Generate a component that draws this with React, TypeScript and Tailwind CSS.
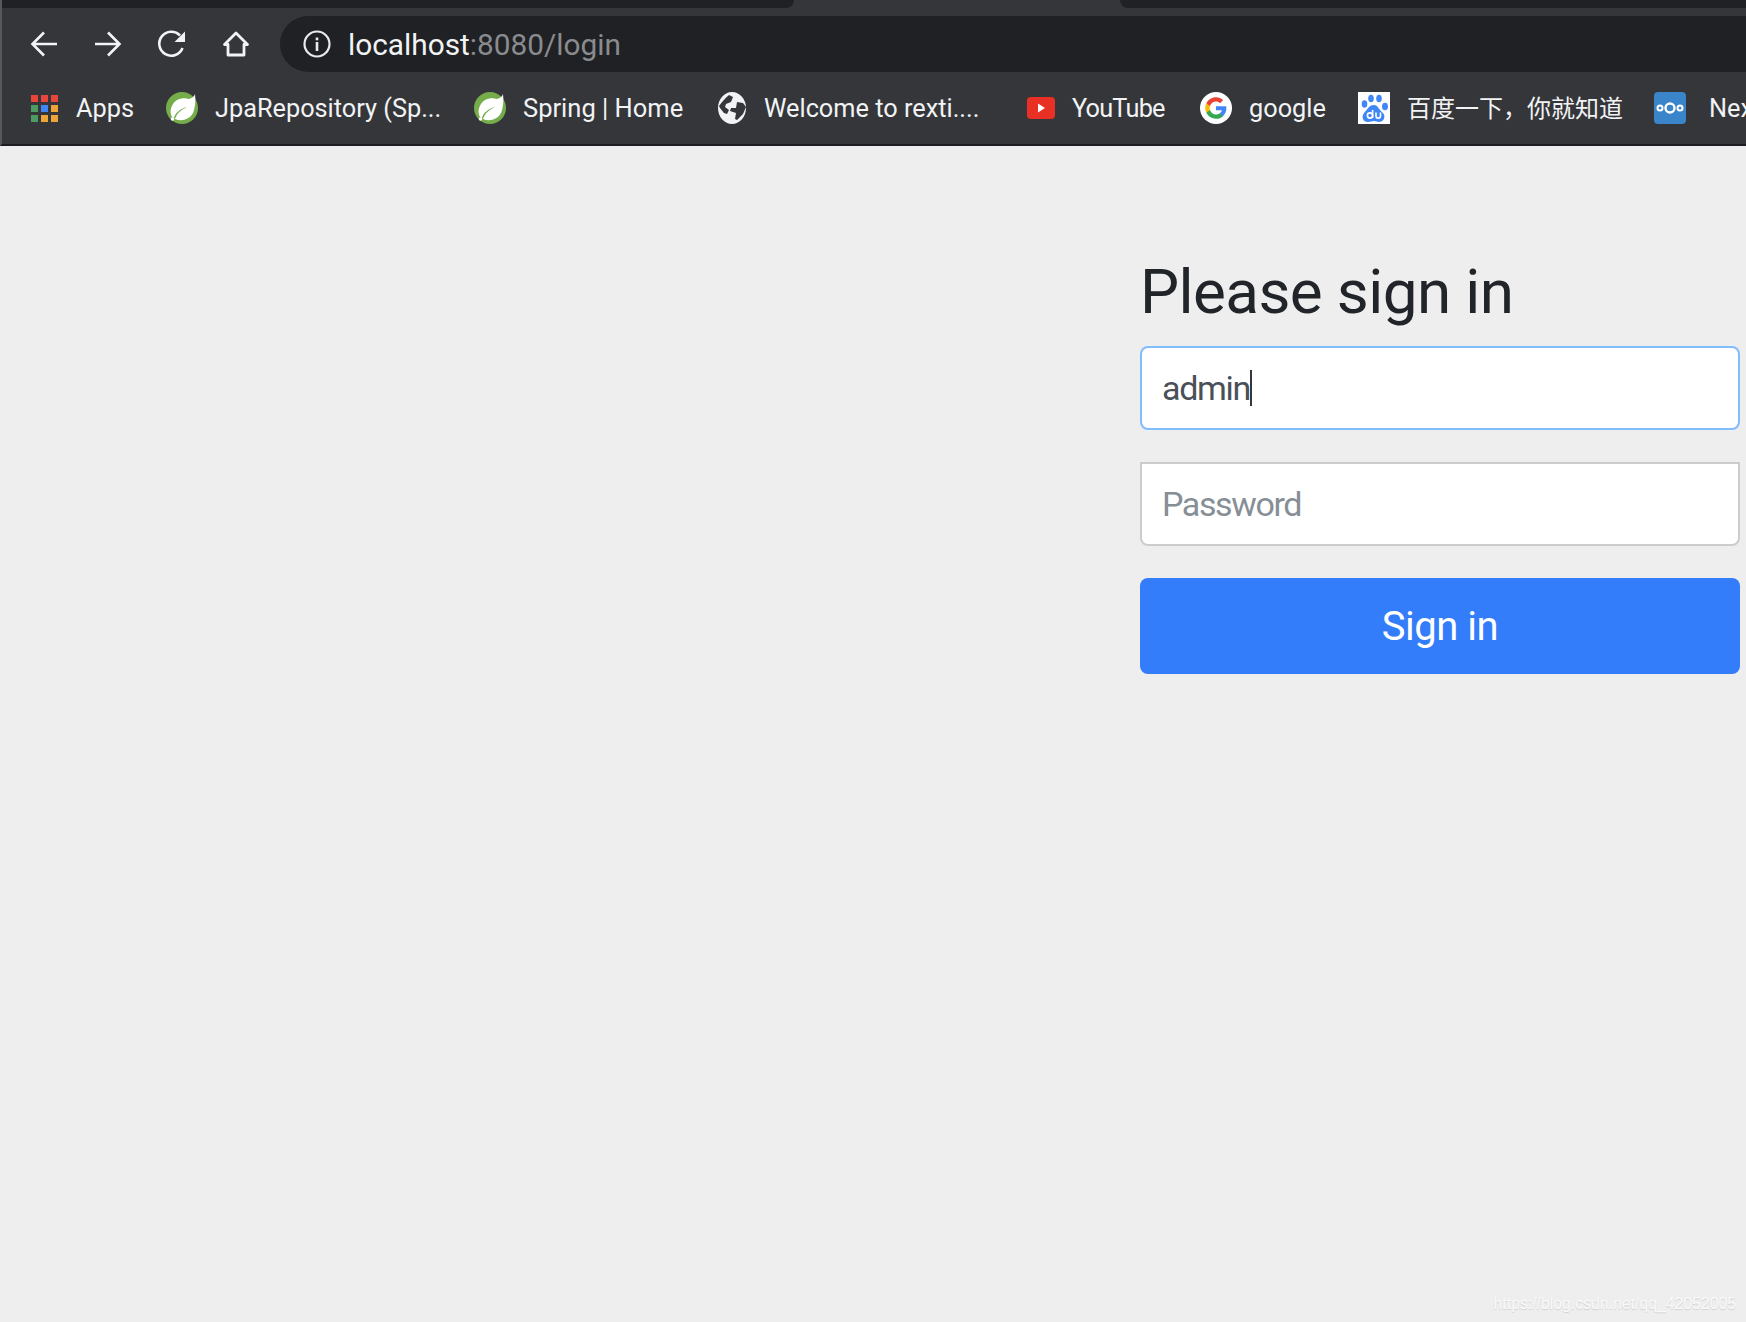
import React from 'react';

const uiFont = "font-['Roboto','Noto_Sans_CJK_SC',sans-serif]";

function AppsIcon() {
  const colors = ['#e8453c', '#e8453c', '#e8453c', '#4d9a63', '#3f85f4', '#eda539', '#4d9a63', '#eda539', '#eda539'];
  return (
    <svg width="27" height="28" viewBox="0 0 27 28">
      {colors.map((c, i) => (
        <rect key={i} x={(i % 3) * 10} y={Math.floor(i / 3) * 10 + 1} width="7" height="7" fill={c} />
      ))}
    </svg>
  );
}

function SpringIcon() {
  return (
    <svg width="32" height="32" viewBox="0 0 32 32">
      <circle cx="16" cy="16" r="16" fill="#76ad4b" />
      <path d="M29 2c-1 3-3 4-6 5-6-2-13 0-16 5-3 5-3 9-1 13l2 1c1-5 6-9 13-11-6 3-10 6-12 12 7 3 15 0 18-6 2-5 3-12 2-19z" fill="#fff" />
      <circle cx="6.500" cy="27" r="1.800" fill="#fff" />
    </svg>
  );
}

function GlobeIcon() {
  return (
    <svg width="28" height="32" viewBox="0 0 28 32">
      <ellipse cx="14" cy="16" rx="14" ry="16" fill="#f1f3f4" />
      <path d="M1 14c3-4 6-8 10-11l4 2-2 5-5 2-1 3 4 3-2 4-3-1-4-5zM19 10l6 1 3 4-3 7-6 6-2-1 1-6-6-2 1-3 5 0z" fill="#35363a" />
    </svg>
  );
}

function YouTubeIcon() {
  return (
    <svg width="28" height="32" viewBox="0 0 28 32">
      <rect x="0" y="5" width="28" height="22" rx="4" fill="#e83024" />
      <path d="M11 11.500l7 4.500-7 4.500z" fill="#fff" />
    </svg>
  );
}

function GoogleIcon() {
  return (
    <svg width="32" height="32" viewBox="0 0 32 32">
      <circle cx="16" cy="16" r="16" fill="#fff" />
      <g transform="translate(5.200 5.200) scale(0.9)">
        <path fill="#4285F4" d="M23.500 12.300c0-.8-.1-1.600-.2-2.300H12v4.400h6.500c-.3 1.500-1.100 2.700-2.400 3.500v2.900h3.900c2.200-2.100 3.500-5.100 3.500-8.500z" />
        <path fill="#34A853" d="M12 24c3.200 0 6-1.100 8-2.900l-3.900-3c-1.100.7-2.500 1.200-4.100 1.200-3.100 0-5.800-2.100-6.700-5H1.300v3.100C3.300 21.300 7.300 24 12 24z" />
        <path fill="#FBBC05" d="M5.300 14.300c-.5-1.500-.5-3.100 0-4.600V6.600h-4c-1.700 3.300-1.700 7.500 0 10.800z" />
        <path fill="#EA4335" d="M12 4.800c1.800 0 3.300.6 4.600 1.800l3.400-3.400C17.900 1.200 15.200 0 12 0 7.300 0 3.300 2.700 1.300 6.600l4 3.100c.9-2.800 3.600-4.900 6.700-4.900z" />
      </g>
    </svg>
  );
}

function BaiduIcon() {
  return (
    <svg width="32" height="32" viewBox="0 0 32 32">
      <rect width="32" height="32" fill="#fff" />
      <g fill="#3f86f6">
        <ellipse cx="6.500" cy="12" rx="2.800" ry="3.800" />
        <ellipse cx="13" cy="6.500" rx="2.800" ry="3.800" />
        <ellipse cx="21" cy="6.500" rx="2.800" ry="3.800" />
        <ellipse cx="27" cy="14.500" rx="3" ry="3.800" />
        <path d="M16 13c4 0 5 5 9 8 3 3 1 9-4 9-2 0-3-1-5-1s-3 1-6 1c-5 0-7-5-4-9 3-3 5-8 10-8z" />
      </g>
      <g fill="none" stroke="#fff" strokeWidth="1.600">
        <circle cx="12" cy="23.500" r="2.600" />
        <path d="M14.600 18v8M18 20.500v3.500c0 2.800 4.500 2.800 4.500 0v-3.500" />
      </g>
    </svg>
  );
}

function NextcloudIcon() {
  return (
    <svg width="32" height="32" viewBox="0 0 32 32">
      <rect width="32" height="32" rx="4" fill="#3a84c9" />
      <g fill="none" stroke="#fff">
        <circle cx="16" cy="16" r="4.500" strokeWidth="2.400" />
        <circle cx="6" cy="16" r="2.500" strokeWidth="2" />
        <circle cx="26" cy="16" r="2.500" strokeWidth="2" />
      </g>
    </svg>
  );
}

function Bookmark({ icon, label, textClass }: { icon: React.ReactNode; label: string; textClass: string }) {
  return (
    <div className="flex items-center gap-[17px] shrink-0">
      {icon}
      <span className={`${textClass} pt-[1px] leading-none text-[#f1f3f4] whitespace-nowrap`}>{label}</span>
    </div>
  );
}

export default function App() {
  return (
    <div className="relative h-[1322px] w-full overflow-hidden flex flex-col bg-[#eeeeee] font-['Roboto',sans-serif]">
      {/* browser chrome */}
      <header className={`${uiFont} shrink-0 bg-[#35363a] border-b-2 border-b-[#1c1d20] border-l-2 border-l-[#57585b]`}>
        <div className="flex h-2 justify-between bg-[#35363a]">
          <div className="w-[792px] bg-[#202124] rounded-br-lg" />
          <div className="w-[626px] bg-[#202124] rounded-bl-lg" />
        </div>
        <div className="flex items-center h-[64px] pt-2 pl-[26px]">
          <svg className="shrink-0" width="32" height="32" viewBox="0 0 32 32" fill="none" stroke="#f1f3f4" strokeWidth="2.600">
            <path d="M29 16H5M16 4.500L4.500 16 16 27.500" />
          </svg>
          <svg className="ml-[32px] shrink-0" width="32" height="32" viewBox="0 0 32 32" fill="none" stroke="#f1f3f4" strokeWidth="2.600">
            <path d="M3 16h24M16 4.500L27.500 16 16 27.500" />
          </svg>
          <svg className="ml-[32px] shrink-0" width="32" height="32" viewBox="0 0 32 32" fill="none">
            <path d="M26.500 20A12 12 0 1 1 24 7.500" stroke="#f1f3f4" strokeWidth="2.600" />
            <path d="M29 3.500v10.500H18.500z" fill="#f1f3f4" />
          </svg>
          <svg className="ml-[32px] shrink-0" width="32" height="32" viewBox="0 0 32 32" fill="none">
            <path d="M16 5L4.500 16.500H8V27h16V16.500h3.500z" stroke="#f1f3f4" strokeWidth="2.800" strokeLinejoin="round" />
          </svg>
          <div className="ml-[28px] flex-1 h-14 -mr-8 flex items-center pl-[22px] bg-[#202124] rounded-full">
            <svg width="30" height="30" viewBox="0 0 30 30" fill="none" className="shrink-0">
              <circle cx="15" cy="15" r="12.500" stroke="#e8eaed" strokeWidth="2.200" />
              <rect x="13.700" y="13" width="2.600" height="9" fill="#e8eaed" />
              <rect x="13.700" y="8.500" width="2.600" height="2.800" fill="#e8eaed" />
            </svg>
            <span className="ml-[16px] pt-[2px] text-[29.800px] leading-none text-[#f1f3f4]">
              localhost<span className="text-[#8a8b8e]">:8080/login</span>
            </span>
          </div>
        </div>
        <div className="flex items-center h-[72px] pl-[29px] overflow-hidden">
          <Bookmark icon={<AppsIcon />} label="Apps" textClass="ml-[1px] w-[57px] text-[25.300px]" />
          <div className="w-[33px] shrink-0" />
          <Bookmark icon={<SpringIcon />} label="JpaRepository (Sp..." textClass="w-[225px] text-[25.300px]" />
          <div className="w-[34px] shrink-0" />
          <Bookmark icon={<SpringIcon />} label="Spring | Home" textClass="w-[162px] text-[25.500px]" />
          <div className="w-[33px] shrink-0" />
          <Bookmark icon={<GlobeIcon />} label="Welcome to rexti...." textClass="ml-[1px] w-[215px] text-[25.300px]" />
          <div className="w-[48px] shrink-0" />
          <Bookmark icon={<YouTubeIcon />} label="YouTube" textClass="w-[93px] text-[25.300px] tracking-[-0.8px]" />
          <div className="w-[35px] shrink-0" />
          <Bookmark icon={<GoogleIcon />} label="google" textClass="w-[75px] text-[25.300px]" />
          <div className="w-[34px] shrink-0" />
          <Bookmark icon={<BaiduIcon />} label="百度一下，你就知道" textClass="w-[214px] text-[24px]" />
          <div className="w-[33px] shrink-0" />
          <Bookmark icon={<NextcloudIcon />} label="Nextcloud" textClass="ml-[6px] w-[110px] text-[25.300px]" />
        </div>
      </header>

      {/* login form */}
      <main className="flex justify-end pt-[110px] pr-[6px]">
        <form className="w-[600px] flex flex-col">
          <h1 className="text-[62px] leading-[72px] font-normal tracking-[-0.6px] text-[#212529] mb-[18px]">Please sign in</h1>
          <div className="h-[84px] flex items-center pl-[20px] bg-white border-2 border-[#80bdff] rounded-lg text-[34px] tracking-[-1.300px] text-[#495057]">
            admin
            <span className="w-[2px] h-[36px] bg-[#32383e]" />
          </div>
          <input
            placeholder="Password"
            className="mt-[32px] h-[84px] pl-[20px] bg-white border-2 border-[#cccccc] rounded-b-lg text-[34px] tracking-[-1.400px] text-[#495057] placeholder:text-[#868e96] outline-none"
          />
          <button
            type="button"
            className="mt-[32px] h-[96px] pt-[2px] bg-[#337dfa] rounded-lg text-white text-[40px] tracking-[-0.5px] text-center"
          >
            Sign in
          </button>
        </form>
      </main>

      <span className="absolute right-[10px] bottom-[6px] text-[15.800px] font-['Liberation_Sans',sans-serif] text-[#fafafa] [text-shadow:0_1px_1px_#cfcfcf]">
        https://blog.csdn.net/qq_42052005
      </span>
    </div>
  );
}
